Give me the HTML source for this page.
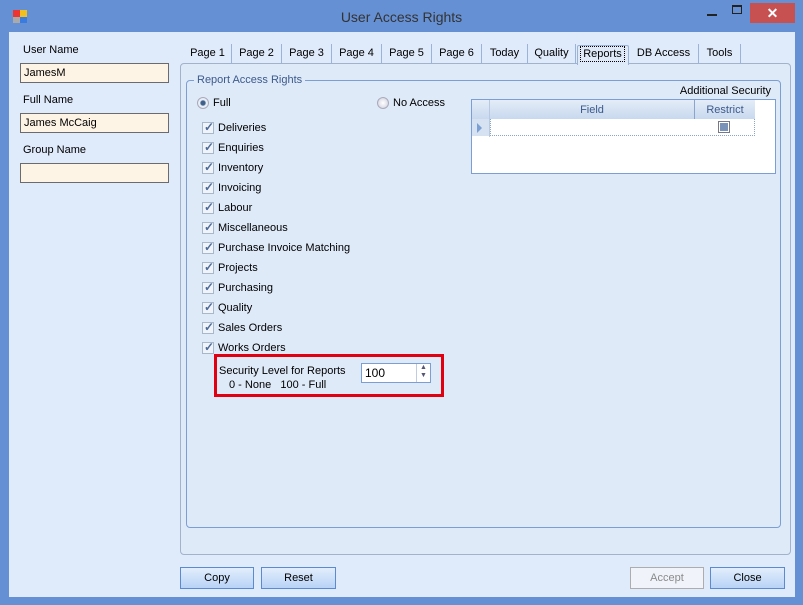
<!DOCTYPE html>
<html><head><meta charset="utf-8"><style>
*{box-sizing:border-box;margin:0;padding:0}
body{width:803px;height:605px;overflow:hidden;background:#6690d4;font-family:"Liberation Sans",sans-serif;font-size:11px;color:#000;position:relative}
.a{position:absolute}
.title{left:0;top:0;width:803px;height:32px;text-align:center;line-height:35px;font-size:14px;color:#333}
.client{left:9px;top:32px;width:786px;height:565px;background:#dfeafb}
.inp{background:#fdf4e6;border:1px solid #6b6b6b;height:20px;width:149px;padding-left:3px;line-height:18px}
.tab{top:44px;height:20px;line-height:19px;text-align:center;border-right:1px solid #9ab3d6}
.panel{left:180px;top:63px;width:611px;height:492px;border:1px solid #a0b2cc;border-radius:4px;background:#dfeaf9}
.group{left:186px;top:80px;width:595px;height:448px;border:1px solid #7b9fd4;border-radius:4px}
.cb{width:12px;height:12px;border:1px solid #a8b8cc;background:#f0f4f9;left:202px}
.cb:after{content:"✓";position:absolute;left:1px;top:-3px;font-size:12px;color:#4c6a99;font-weight:bold}
.cl{left:218px}
.btn{top:567px;height:22px;border:1px solid #5b8ad0;background:linear-gradient(#e2eefc,#b8d3f6);text-align:center;line-height:20px}
</style></head><body>
<div class="a" style="left:13px;top:10px;width:7px;height:7px;background:#e33"></div>
<div class="a" style="left:20px;top:10px;width:7px;height:7px;background:#f0c020"></div>
<div class="a" style="left:20px;top:17px;width:7px;height:6px;background:#3a7be0"></div>
<div class="a" style="left:13px;top:17px;width:7px;height:6px;background:#aaa"></div>
<div class="a title">User Access Rights</div>
<div class="a" style="left:707px;top:14px;width:10px;height:2px;background:#222"></div>
<div class="a" style="left:732px;top:5px;width:10px;height:9px;border:1px solid #222;border-top-width:2px"></div>
<div class="a" style="left:750px;top:3px;width:45px;height:20px;background:#c75050;color:#fff;text-align:center;line-height:20px;font-size:14px;font-weight:bold">✕</div>
<div class="a client"></div>
<div class="a" style="left:23px;top:44px">User Name</div>
<div class="a inp" style="left:20px;top:63px">JamesM</div>
<div class="a" style="left:23px;top:94px">Full Name</div>
<div class="a inp" style="left:20px;top:113px">James McCaig</div>
<div class="a" style="left:23px;top:144px">Group Name</div>
<div class="a inp" style="left:20px;top:163px"></div>
<div class="a panel"></div>
<div class="a tab" style="left:184px;width:48px">Page 1</div>
<div class="a tab" style="left:232px;width:50px">Page 2</div>
<div class="a tab" style="left:282px;width:50px">Page 3</div>
<div class="a tab" style="left:332px;width:50px">Page 4</div>
<div class="a tab" style="left:382px;width:50px">Page 5</div>
<div class="a tab" style="left:432px;width:50px">Page 6</div>
<div class="a tab" style="left:482px;width:46px">Today</div>
<div class="a tab" style="left:528px;width:48px">Quality</div>
<div class="a" style="left:577px;top:45px;width:52px;height:20px;background:#dfeaf9;border:1px solid #9ab3d6;border-bottom:none;border-radius:2px 2px 0 0"></div>
<div class="a" style="left:580px;top:46px;width:45px;height:16px;border:1px dotted #000;text-align:center;line-height:15px">Reports</div>
<div class="a tab" style="left:629px;width:70px">DB Access</div>
<div class="a tab" style="left:699px;width:42px">Tools</div>
<div class="a group"></div>
<div class="a" style="left:194px;top:74px;background:#dfeaf9;padding:0 3px;color:#3b5a8c">Report Access Rights</div>
<div class="a" style="left:197px;top:97px;width:12px;height:12px;border-radius:50%;border:1px solid #aab;background:radial-gradient(#40608c 30%,#e8eef6 45%)"></div>
<div class="a" style="left:213px;top:97px">Full</div>
<div class="a" style="left:377px;top:97px;width:12px;height:12px;border-radius:50%;border:1px solid #aab;background:radial-gradient(#fff,#ccd)"></div>
<div class="a" style="left:393px;top:97px">No Access</div>
<div class="a" style="left:600px;width:171px;text-align:right;top:85px">Additional Security</div>
<div class="a" style="left:471px;top:99px;width:305px;height:75px;border:1px solid #7b9fd4;background:#fff"></div>
<div class="a" style="left:472px;top:100px;width:283px;height:19px;background:linear-gradient(#e4edf8,#c8d8ee)"></div>
<div class="a" style="left:489px;top:100px;width:1px;height:37px;background:#b8c8e0"></div>
<div class="a" style="left:694px;top:100px;width:1px;height:19px;background:#8aa4cc"></div>
<div class="a" style="left:490px;top:104px;width:204px;text-align:center;color:#3b5a8c">Field</div>
<div class="a" style="left:695px;top:104px;width:60px;text-align:center;color:#3b5a8c">Restrict</div>
<div class="a" style="left:472px;top:119px;width:17px;height:17px;background:#d6e2f2"></div>
<div class="a" style="left:477px;top:123px;width:0;height:0;border-left:5px solid #7b9fd4;border-top:5px solid transparent;border-bottom:5px solid transparent"></div>
<div class="a" style="left:490px;top:119px;width:265px;height:17px;border:1px dotted #8aa4cc;border-top:none"></div>
<div class="a" style="left:718px;top:121px;width:12px;height:12px;border:1px solid #778;background:#7a92b8;box-shadow:inset 0 0 0 1px #fff"></div>

<div class="a cb" style="top:122px"></div><div class="a cl" style="top:122px">Deliveries</div>
<div class="a cb" style="top:142px"></div><div class="a cl" style="top:142px">Enquiries</div>
<div class="a cb" style="top:162px"></div><div class="a cl" style="top:162px">Inventory</div>
<div class="a cb" style="top:182px"></div><div class="a cl" style="top:182px">Invoicing</div>
<div class="a cb" style="top:202px"></div><div class="a cl" style="top:202px">Labour</div>
<div class="a cb" style="top:222px"></div><div class="a cl" style="top:222px">Miscellaneous</div>
<div class="a cb" style="top:242px"></div><div class="a cl" style="top:242px">Purchase Invoice Matching</div>
<div class="a cb" style="top:262px"></div><div class="a cl" style="top:262px">Projects</div>
<div class="a cb" style="top:282px"></div><div class="a cl" style="top:282px">Purchasing</div>
<div class="a cb" style="top:302px"></div><div class="a cl" style="top:302px">Quality</div>
<div class="a cb" style="top:322px"></div><div class="a cl" style="top:322px">Sales Orders</div>
<div class="a cb" style="top:342px"></div><div class="a cl" style="top:342px">Works Orders</div>

<div class="a" style="left:214px;top:354px;width:230px;height:43px;border:3px solid #e00010"></div>
<div class="a" style="left:219px;top:365px">Security Level for Reports</div>
<div class="a" style="left:229px;top:379px">0 - None &nbsp;&nbsp;100 - Full</div>
<div class="a" style="left:361px;top:363px;width:70px;height:20px;border:1px solid #7b9fd4;background:#fff;padding-left:3px;line-height:18px;font-size:12px">100</div>
<div class="a" style="left:416px;top:364px;width:14px;height:18px;border-left:1px solid #c0cde0;font-size:7px;color:#557;text-align:center;line-height:8px">▲<br>▼</div>

<div class="a btn" style="left:180px;width:74px">Copy</div>
<div class="a btn" style="left:261px;width:75px">Reset</div>
<div class="a btn" style="left:630px;width:74px;border-color:#adadad;background:#f0f4fa;color:#8a8a8a">Accept</div>
<div class="a btn" style="left:710px;width:75px">Close</div>
</body></html>
